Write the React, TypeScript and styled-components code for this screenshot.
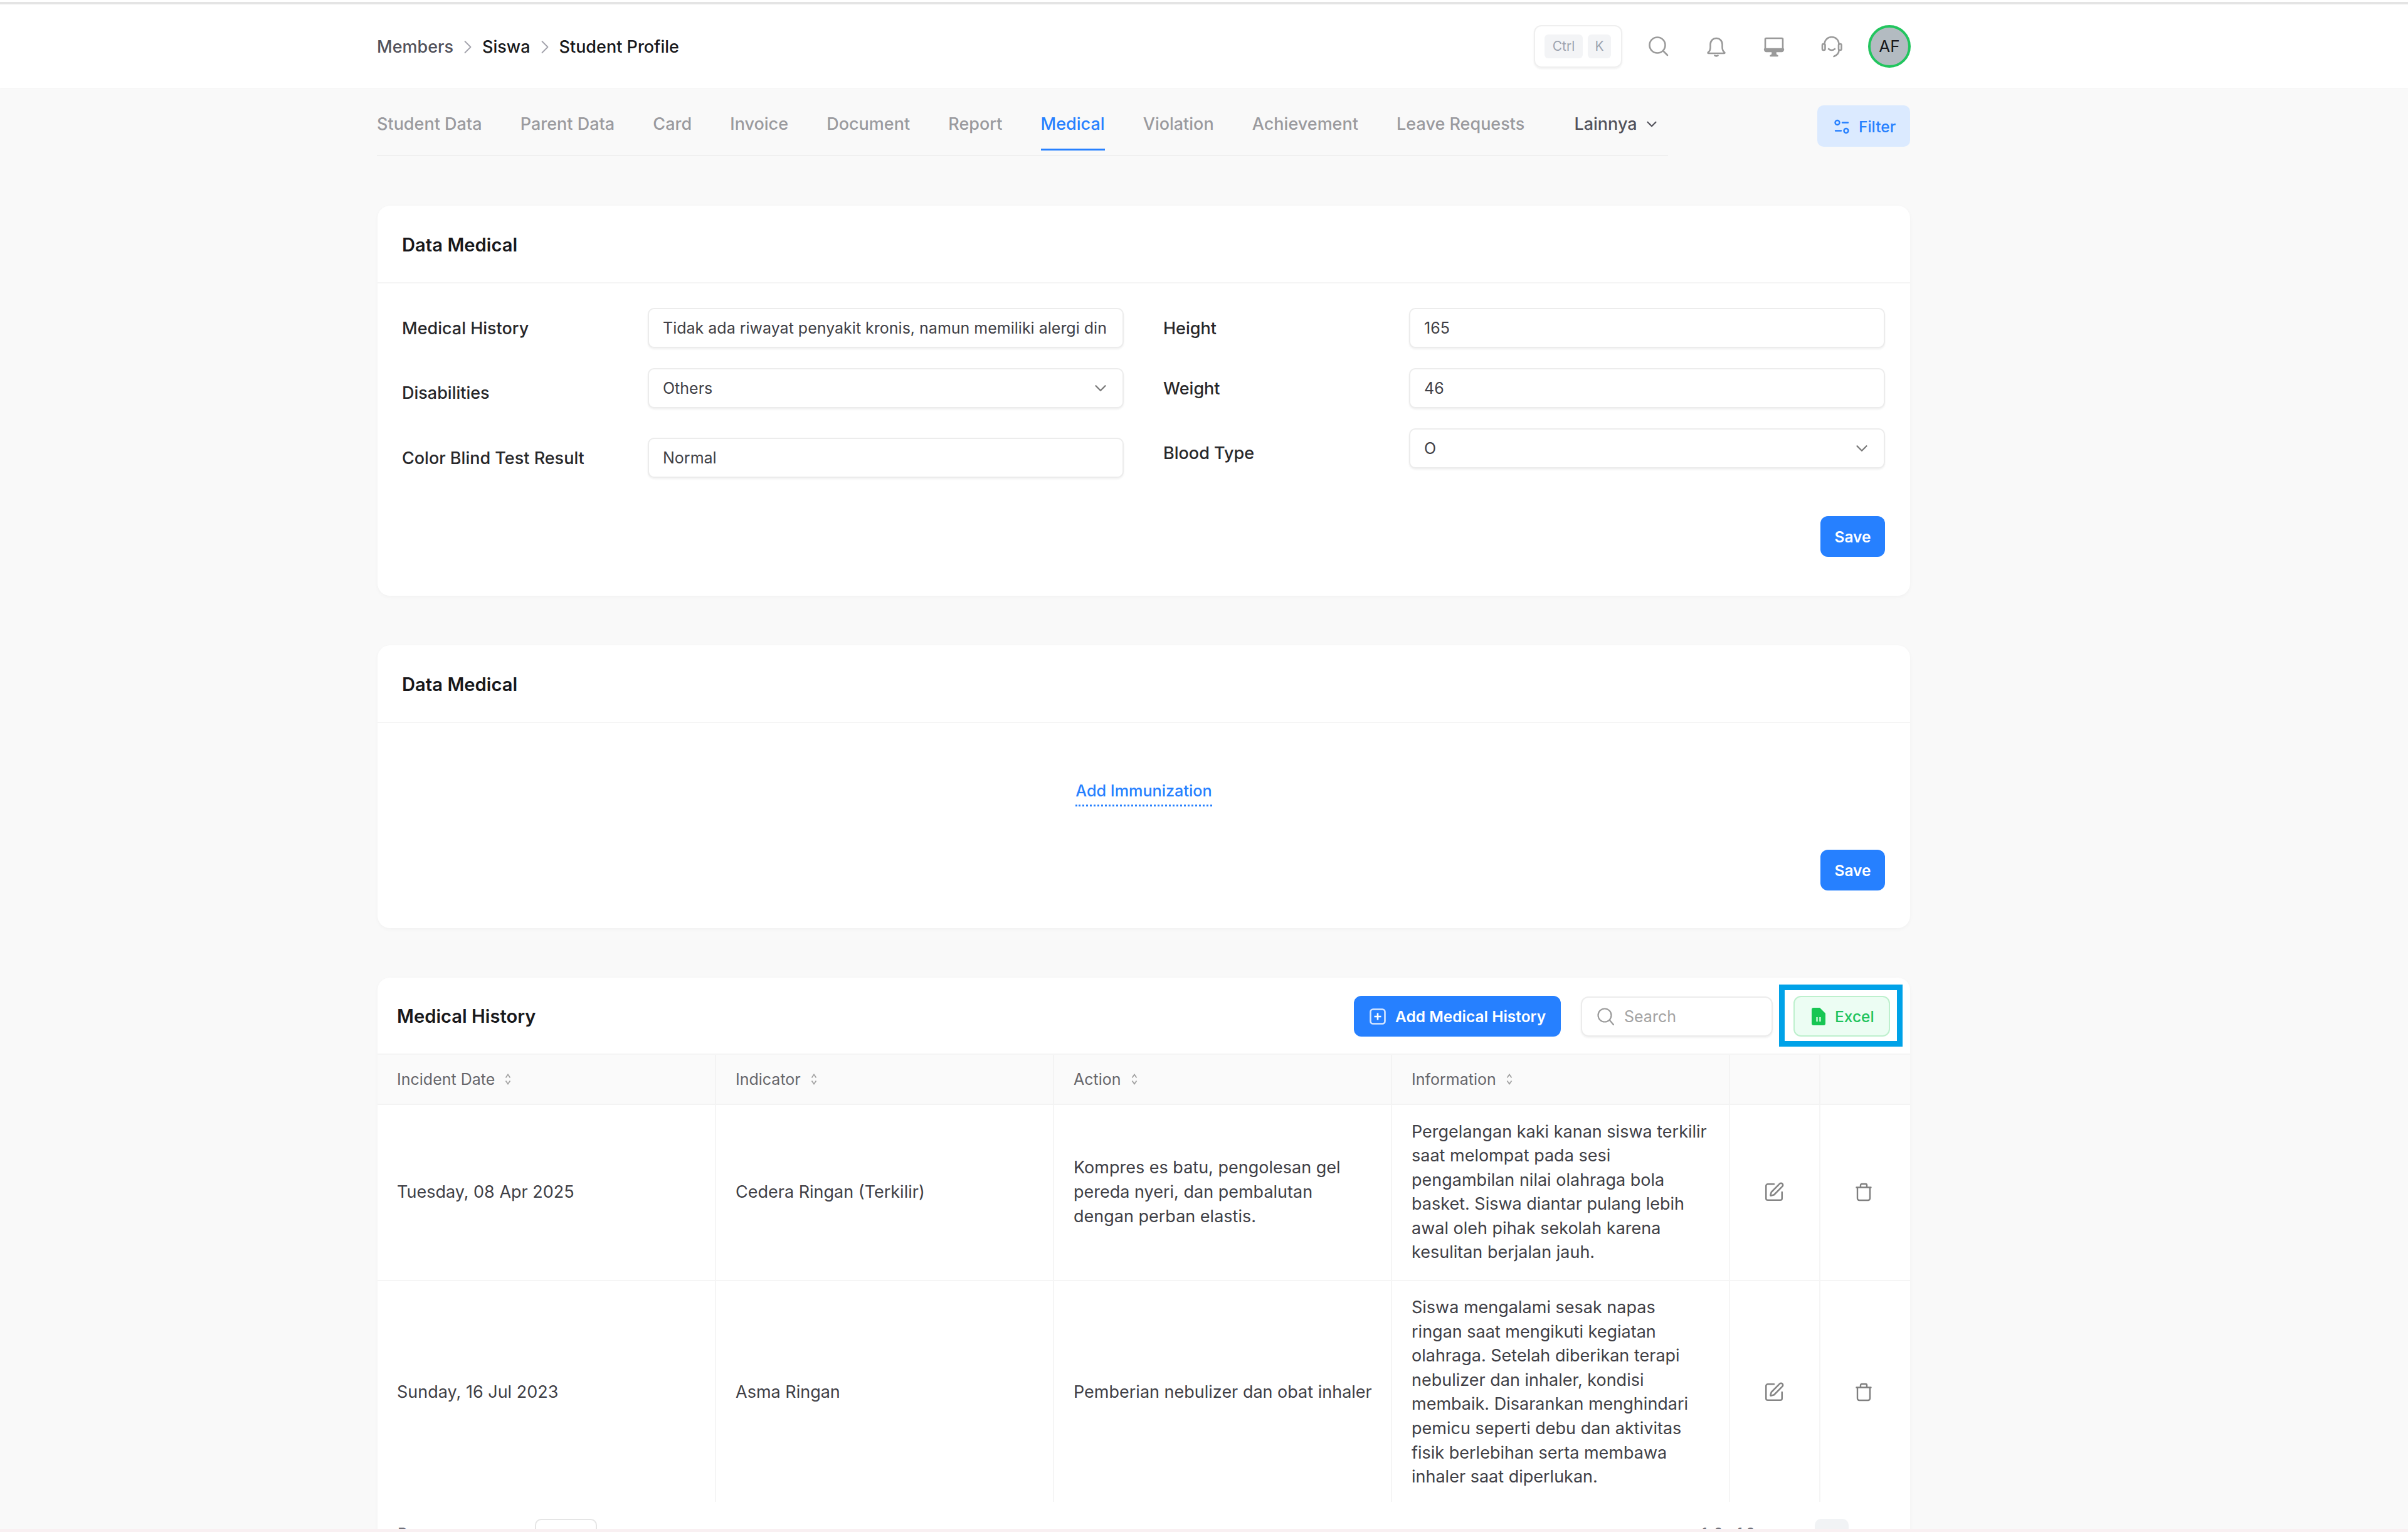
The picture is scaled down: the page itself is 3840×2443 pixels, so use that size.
import React from "react";
import styled, { createGlobalStyle } from "styled-components";
import { ChevronDown, ChevronRight, SquarePen } from "lucide-react";

const Global = createGlobalStyle`
  html, body { margin: 0; padding: 0; background: #f9f9f9; }
  * { box-sizing: border-box; }
  body { font-family: Inter, "Noto Sans", "Liberation Sans", sans-serif; color: #27272a; }
`;

const BLUE = "#2680ff";

const Page = styled.div`
  position: relative;
  height: 2443px;
  overflow: hidden;
  background: #f9f9f9;
`;
const TopRule = styled.div`
  height: 7px;
  background: #fff;
  border-bottom: 4px solid #e4e4e4;
`;
const Header = styled.header`
  display: flex;
  align-items: center;
  justify-content: space-between;
  height: 133px;
  padding: 0 793px 0 601px;
  background: #fff;
  box-shadow: 0 1px 2px rgba(0, 0, 0, 0.02);
`;
const Crumbs = styled.nav`
  display: flex;
  align-items: center;
  gap: 5px;
  margin-top: 2px;
  font-size: 27px;
  font-weight: 500;
`;
const Crumb = styled.span<{ $muted?: boolean }>`
  color: ${(p) => (p.$muted ? "#52525b" : "#18181b")};
`;
const CrumbSep = styled(ChevronRight)`
  width: 36px;
  height: 36px;
  color: #a1a1aa;
  stroke-width: 1.2;
`;
const HeaderRight = styled.div`
  display: flex;
  align-items: center;
  gap: 40px;
`;
const Shortcut = styled.div`
  display: flex;
  align-items: center;
  gap: 8px;
  width: 141px;
  height: 68px;
  padding: 0 15px;
  border: 2px solid #efefef;
  border-radius: 12px;
  box-shadow: 0 2px 3px rgba(0, 0, 0, 0.06);
`;
const Key = styled.span<{ $w: number }>`
  display: flex;
  align-items: center;
  justify-content: center;
  width: ${(p) => p.$w}px;
  height: 38px;
  border-radius: 6px;
  background: #f3f4f6;
  color: #9ca3af;
  font-size: 21px;
  font-weight: 400;
`;
const HeaderIcons = styled.div`
  display: flex;
  gap: 56px;
`;
const HeaderIcon = styled.svg`
  display: block;
  width: 36px;
  height: 36px;
  fill: none;
  stroke: #9a9a9a;
  stroke-width: 2.6;
  stroke-linecap: round;
  stroke-linejoin: round;
`;
const Avatar = styled.div`
  display: flex;
  align-items: center;
  justify-content: center;
  width: 68px;
  height: 68px;
  border-radius: 50%;
  border: 4px solid #22c55e;
  background: #b3bbc1;
  color: #18181b;
  font-size: 26px;
  font-weight: 400;
`;
const Main = styled.main`
  width: 3046px;
  padding-left: 602px;
`;
const TabBar = styled.div`
  display: flex;
  justify-content: space-between;
  align-items: flex-start;
  padding-top: 28px;
  margin-bottom: 79px;
`;
const Tabs = styled.div`
  display: flex;
  gap: 61.2px;
  width: 2059px;
  height: 81px;
  margin-left: -1px;
  padding-bottom: 7px;
  border-bottom: 2px solid #f0f0f0;
`;
const Tab = styled.div<{ $active?: boolean; $more?: boolean }>`
  display: flex;
  align-items: center;
  gap: 10px;
  height: 72px;
  margin-left: ${(p) => (p.$more ? "18px" : "0")};
  padding: 12px 0 21px;
  border-bottom: 3px solid ${(p) => (p.$active ? BLUE : "transparent")};
  color: ${(p) => (p.$active ? BLUE : p.$more ? "#52525b" : "#9a9a9e")};
  font-size: 27px;
  font-weight: 500;
  line-height: 36px;
`;
const SmallChevron = styled(ChevronDown)`
  width: 26px;
  height: 26px;
  color: #52525b;
  stroke-width: 2;
`;
const FilterButton = styled.button`
  display: flex;
  align-items: center;
  gap: 15px;
  width: 148px;
  height: 66px;
  padding: 2px 0 0 27px;
  border: 0;
  border-radius: 10px;
  background: #dbeaff;
  color: ${BLUE};
  font: 500 24.5px Inter, sans-serif;
`;
const Card = styled.section<{ $h?: number; $mb?: number }>`
  position: relative;
  height: ${(p) => (p.$h ? p.$h + "px" : "auto")};
  margin-bottom: ${(p) => p.$mb ?? 79}px;
  border-radius: 20px;
  background: #fff;
  box-shadow: 0 2px 6px rgba(0, 0, 0, 0.035);
`;
const CardHead = styled.div`
  display: flex;
  align-items: center;
  height: 124px;
  padding: 2px 39px 0;
  border-bottom: 2px solid #f5f5f5;
`;
const CardTitle = styled.h2`
  margin: 0;
  font-size: 29.2px;
  font-weight: 600;
  color: #18181b;
`;
const FormGrid = styled.div`
  display: grid;
  grid-template-columns: 1151px 1151px;
  column-gap: 63px;
  padding: 39px 40px 0 39px;
  height: 371px;
`;
const Column = styled.div`
  display: flex;
  flex-direction: column;
`;
const Field = styled.div<{ $tall?: boolean }>`
  display: flex;
  height: ${(p) => (p.$tall ? "79px" : "64px")};
  margin-bottom: 32px;
`;
const Label = styled.label`
  align-self: center;
  width: 392px;
  font-size: 27px;
  font-weight: 500;
  color: #27272a;
`;
const Control = styled.div`
  display: flex;
  align-items: center;
  justify-content: space-between;
  width: 759px;
  height: 64px;
  padding: 0 24px 0 22px;
  border: 2px solid #ececec;
  border-radius: 10px;
  background: #fff;
  box-shadow: 0 2px 3px rgba(0, 0, 0, 0.06);
  font-size: 25px;
  color: #3f3f46;
`;
const ControlText = styled.span`
  display: block;
  flex: 1;
  overflow: hidden;
  white-space: nowrap;
`;
const SelectChevron = styled(ChevronDown)`
  flex: none;
  width: 30px;
  height: 30px;
  margin-right: -4px;
  color: #777;
  stroke-width: 1.8;
`;
const Actions = styled.div`
  display: flex;
  justify-content: flex-end;
  padding: 0 40px;
`;
const SaveButton = styled.button`
  width: 103px;
  height: 65px;
  border: 0;
  border-radius: 12px;
  background: ${BLUE};
  color: #fff;
  font: 600 24.5px Inter, sans-serif;
`;
const AddLinkRow = styled.div`
  display: flex;
  justify-content: center;
  padding-top: 89px;
  height: 202px;
`;
const AddLink = styled.a`
  height: 44px;
  border-bottom: 3px dotted ${BLUE};
  color: ${BLUE};
  font-size: 25.2px;
  font-weight: 500;
  line-height: 38px;
`;
const HistoryHead = styled.div`
  display: flex;
  align-items: center;
  height: 123px;
  padding: 2px 32px 0 31px;
  border-bottom: 2px solid #f5f5f5;
`;
const HistoryTitle = styled(CardTitle)`
  margin-right: auto;
`;
const AddButton = styled.button`
  display: flex;
  align-items: center;
  gap: 15px;
  width: 330px;
  height: 65px;
  margin-right: 32px;
  padding: 0 0 0 25px;
  border: 0;
  border-radius: 12px;
  background: ${BLUE};
  color: #fff;
  font: 600 24.5px Inter, sans-serif;
`;
const SearchBox = styled.div`
  display: flex;
  align-items: center;
  gap: 16px;
  width: 306px;
  height: 64px;
  margin-right: 33px;
  padding-left: 23px;
  border: 2px solid #ececec;
  border-radius: 12px;
  box-shadow: 0 2px 3px rgba(0, 0, 0, 0.06);
  color: #a3a3a3;
  font-size: 25px;
`;
const ExcelButton = styled.button`
  display: flex;
  align-items: center;
  gap: 15px;
  width: 154px;
  height: 65px;
  padding: 0 0 0 27px;
  border: 2px solid #bdf0cd;
  border-radius: 12px;
  background: #ecfdf3;
  color: #1fc45c;
  font: 500 24.5px Inter, sans-serif;
`;
const Highlight = styled.div`
  position: absolute;
  left: 2235px;
  top: 11px;
  width: 197px;
  height: 99px;
  border: 9px solid #00a2e8;
  pointer-events: none;
`;
const TableClip = styled.div`
  height: 713px;
  overflow: hidden;
`;
const Table = styled.table`
  width: 2444px;
  table-layout: fixed;
  border-collapse: collapse;
`;
const Col = styled.col<{ $w: number }>`
  width: ${(p) => p.$w}px;
`;
const Th = styled.th`
  height: 79px;
  padding: 0 32px 0 31px;
  background: #fafafa;
  border-right: 2px solid #f3f3f3;
  border-bottom: 2px solid #f3f3f3;
  text-align: left;
  font-size: 25px;
  font-weight: 400;
  color: #66666b;
  &:last-child { border-right: 0; }
`;
const HeadInner = styled.span`
  display: inline-flex;
  align-items: center;
  gap: 14px;
`;
const SortIcon = styled.svg`
  width: 14px;
  height: 24px;
  fill: none;
  stroke: #a0a0a0;
  stroke-width: 1.7;
`;
const Td = styled.td`
  padding: 23.5px 32px 23.5px 31px;
  border-right: 2px solid #f5f5f5;
  border-bottom: 2px solid #f5f5f5;
  font-size: 27px;
  line-height: 38.6px;
  color: #3f3f46;
  vertical-align: middle;
  &:nth-child(3) { padding-right: 27px; }
  &:last-child { border-right: 0; }
`;
const IconCell = styled(Td)`
  padding: 0 3px 0 0;
  text-align: center;
  line-height: 0;
  &:last-child { padding-right: 5px; }
`;
const EditIcon = styled(SquarePen)`
  display: inline-block;
  vertical-align: middle;
  width: 34px;
  height: 34px;
  color: #858585;
  stroke-width: 1.8;
`;
const TrashIcon = styled.svg`
  display: inline-block;
  vertical-align: middle;
  width: 30px;
  height: 30px;
  fill: none;
  stroke: #7f7f7f;
  stroke-width: 2.4;
  stroke-linecap: round;
  stroke-linejoin: round;
`;
const TableFoot = styled.div`
  display: flex;
  align-items: flex-start;
  height: 80px;
  padding: 27px 98px 0 32px;
  font-size: 24px;
  color: #71717a;
`;
const FootText = styled.span`
  margin-top: 6px;
  line-height: 36px;
`;
const FootLabel = styled(FootText)`
  width: 219px;
`;
const PageSize = styled.div`
  width: 99px;
  height: 60px;
  border: 2px solid #e5e5e5;
  border-radius: 10px;
`;
const PageInfo = styled(FootText)`
  margin-left: auto;
  margin-right: 95px;
`;
const PageButton = styled.div`
  width: 54px;
  height: 60px;
  border-radius: 10px;
  background: #f1f3f5;
`;
const BottomStrip = styled.div`
  position: absolute;
  left: 0;
  right: 0;
  bottom: 0;
  height: 5px;
  background: #f9f0f2;
`;

const Sort = () => (
  <SortIcon viewBox="0 0 14 24">
    <path d="M3.500 9.500 7 4.500l3.500 5M3.500 14.500l3.500 5 3.500-5" />
  </SortIcon>
);
const Trash = () => (
  <TrashIcon viewBox="0 0 30 30">
    <path d="M3.500 7.500h23M5 7.500v17.500a3 3 0 0 0 3 3h14a3 3 0 0 0 3-3V7.500M10 7V4a2 2 0 0 1 2-2h6a2 2 0 0 1 2 2v3" />
  </TrashIcon>
);

const tabs = ["Student Data", "Parent Data", "Card", "Invoice", "Document", "Report", "Medical", "Violation", "Achievement", "Leave Requests"];
const rows = [
  {
    date: "Tuesday, 08 Apr 2025",
    indicator: "Cedera Ringan (Terkilir)",
    action: "Kompres es batu, pengolesan gel pereda nyeri, dan pembalutan dengan perban elastis.",
    info: "Pergelangan kaki kanan siswa terkilir saat melompat pada sesi pengambilan nilai olahraga bola basket. Siswa diantar pulang lebih awal oleh pihak sekolah karena kesulitan berjalan jauh.",
  },
  {
    date: "Sunday, 16 Jul 2023",
    indicator: "Asma Ringan",
    action: "Pemberian nebulizer dan obat inhaler",
    info: "Siswa mengalami sesak napas ringan saat mengikuti kegiatan olahraga. Setelah diberikan terapi nebulizer dan inhaler, kondisi membaik. Disarankan menghindari pemicu seperti debu dan aktivitas fisik berlebihan serta membawa inhaler saat diperlukan.",
  },
];

export default function App() {
  return (
    <Page>
      <Global />
      <TopRule />
      <Header>
        <Crumbs>
          <Crumb $muted>Members</Crumb>
          <CrumbSep />
          <Crumb>Siswa</Crumb>
          <CrumbSep />
          <Crumb>Student Profile</Crumb>
        </Crumbs>
        <HeaderRight>
          <Shortcut>
            <Key $w={61}>Ctrl</Key>
            <Key $w={37}>K</Key>
          </Shortcut>
          <HeaderIcons>
            <HeaderIcon viewBox="0 0 36 36">
              <circle cx="16" cy="16" r="12.500" />
              <path d="m25.500 25.500 6.500 6.500" />
            </HeaderIcon>
            <HeaderIcon viewBox="0 0 36 36">
              <path d="M5 27.500c2.500-2 3.500-4 3.500-8v-5a9.500 9.500 0 0 1 19 0v5c0 4 1 6 3.500 8 .8.8.3 1.500-.7 1.500H5.700c-1 0-1.500-.7-.7-1.500Z" />
              <path d="M15.500 32.500c1.500 1 3.500 1 5 0" />
            </HeaderIcon>
            <HeaderIcon viewBox="0 0 36 36">
              <rect x="4" y="5" width="28" height="21" rx="1.500" />
              <path d="M4 23h28" strokeWidth="4.500" />
              <path d="M15.500 27v4l-3 2h11l-3-2v-4Z" fill="#9a9a9a" />
            </HeaderIcon>
            <HeaderIcon viewBox="0 0 36 36">
              <path d="M6.500 15C6.500 8 11.500 3 18 3s11.500 5 11.500 12" />
              <rect x="3" y="14" width="4.500" height="10" rx="2" />
              <rect x="29" y="14" width="4.500" height="10" rx="2" />
              <path d="M29.500 24c0 5-3 8-8 10M13 22c3 2.500 7 2.500 10 0" />
            </HeaderIcon>
          </HeaderIcons>
          <Avatar>AF</Avatar>
        </HeaderRight>
      </Header>
      <Main>
        <TabBar>
          <Tabs>
            {tabs.map((t) => (
              <Tab key={t} $active={t === "Medical"}>{t}</Tab>
            ))}
            <Tab $more>
              Lainnya
              <SmallChevron />
            </Tab>
          </Tabs>
          <FilterButton>
            <svg width="24" height="26" viewBox="0 0 24 26" fill="none" stroke={BLUE} strokeWidth="2.400" strokeLinecap="round">
              <circle cx="5" cy="6.500" r="3.500" />
              <path d="M13 6.500h9M2 19.500h9" />
              <circle cx="19" cy="19.500" r="3.500" />
            </svg>
            Filter
          </FilterButton>
        </TabBar>

        <Card $h={622}>
          <CardHead>
            <CardTitle>Data Medical</CardTitle>
          </CardHead>
          <FormGrid>
            <Column>
              <Field>
                <Label>Medical History</Label>
                <Control>
                  <ControlText>Tidak ada riwayat penyakit kronis, namun memiliki alergi dingin</ControlText>
                </Control>
              </Field>
              <Field $tall>
                <Label>Disabilities</Label>
                <Control>
                  <ControlText>Others</ControlText>
                  <SelectChevron />
                </Control>
              </Field>
              <Field>
                <Label>Color Blind Test Result</Label>
                <Control>
                  <ControlText>Normal</ControlText>
                </Control>
              </Field>
            </Column>
            <Column>
              <Field>
                <Label>Height</Label>
                <Control>
                  <ControlText>165</ControlText>
                </Control>
              </Field>
              <Field>
                <Label>Weight</Label>
                <Control>
                  <ControlText>46</ControlText>
                </Control>
              </Field>
              <Field $tall>
                <Label>Blood Type</Label>
                <Control>
                  <ControlText>O</ControlText>
                  <SelectChevron />
                </Control>
              </Field>
            </Column>
          </FormGrid>
          <Actions>
            <SaveButton>Save</SaveButton>
          </Actions>
        </Card>

        <Card $h={451}>
          <CardHead>
            <CardTitle>Data Medical</CardTitle>
          </CardHead>
          <AddLinkRow>
            <AddLink>Add Immunization</AddLink>
          </AddLinkRow>
          <Actions>
            <SaveButton>Save</SaveButton>
          </Actions>
        </Card>

        <Card $mb={0}>
          <HistoryHead>
            <HistoryTitle>Medical History</HistoryTitle>
            <AddButton>
              <svg width="26" height="26" viewBox="0 0 26 26" fill="none" stroke="#d6e6ff" strokeWidth="2.600">
                <rect x="1.500" y="1.500" width="23" height="23" rx="4" />
                <path d="M13 7.500v11M7.500 13h11" stroke="#fff" />
              </svg>
              Add Medical History
            </AddButton>
            <SearchBox>
              <svg width="28" height="30" viewBox="0 0 28 30" fill="none" stroke="#9a9a9a" strokeWidth="2.200" strokeLinecap="round">
                <circle cx="13" cy="13" r="10.500" />
                <path d="m21 21 6 7" />
              </svg>
              Search
            </SearchBox>
            <ExcelButton>
              <svg width="22" height="28" viewBox="0 0 22 28">
                <path d="M3 0h10l9 9v16a3 3 0 0 1-3 3H3a3 3 0 0 1-3-3V3a3 3 0 0 1 3-3Z" fill="#17c653" />
                <path d="M7 15h3v7H7zM12 15h3v7h-3z" fill="#a5eebd" />
              </svg>
              Excel
            </ExcelButton>
          </HistoryHead>
          <Highlight />
          <TableClip>
            <Table>
              <colgroup>
                <Col $w={539} />
                <Col $w={539} />
                <Col $w={539} />
                <Col $w={539} />
                <Col $w={144} />
                <Col $w={144} />
              </colgroup>
              <thead>
                <tr>
                  {["Incident Date", "Indicator", "Action", "Information"].map((h) => (
                    <Th key={h}>
                      <HeadInner>
                        {h}
                        <Sort />
                      </HeadInner>
                    </Th>
                  ))}
                  <Th />
                  <Th />
                </tr>
              </thead>
              <tbody>
                {rows.map((r) => (
                  <tr key={r.date}>
                    <Td>{r.date}</Td>
                    <Td>{r.indicator}</Td>
                    <Td>{r.action}</Td>
                    <Td>{r.info}</Td>
                    <IconCell>
                      <EditIcon />
                    </IconCell>
                    <IconCell>
                      <Trash />
                    </IconCell>
                  </tr>
                ))}
              </tbody>
            </Table>
          </TableClip>
          <TableFoot>
            <FootLabel>Rows per page</FootLabel>
            <PageSize />
            <PageInfo>1-2 of 2</PageInfo>
            <PageButton />
          </TableFoot>
        </Card>
      </Main>
      <BottomStrip />
    </Page>
  );
}
